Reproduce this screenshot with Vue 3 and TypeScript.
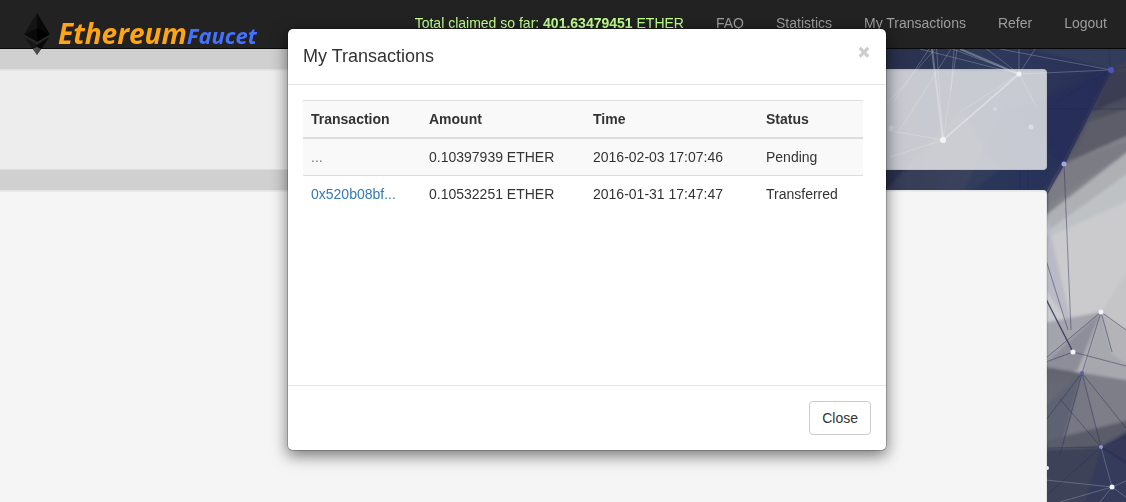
<script setup lang="ts">
import { ref } from 'vue'

interface Transaction {
  hash: string
  amount: string
  time: string
  status: string
}

const open = ref(true)
const links: string[] = ['FAQ', 'Statistics', 'My Transactions', 'Refer', 'Logout']
const transactions: Transaction[] = [
  { hash: '...', amount: '0.10397939 ETHER', time: '2016-02-03 17:07:46', status: 'Pending' },
  { hash: '0x520b08bf...', amount: '0.10532251 ETHER', time: '2016-01-31 17:47:47', status: 'Transferred' },
]
</script>

<template>
  <div class="page">
    <svg class="backdrop" viewBox="700 0 426 502" preserveAspectRatio="xMaxYMin slice" aria-hidden="true">
      <defs>
        <linearGradient id="sky" x1="0" y1="0" x2="1" y2="0">
          <stop offset="0" stop-color="#d0d0d0" />
          <stop offset=".35" stop-color="#252b45" />
          <stop offset=".65" stop-color="#303a5b" />
          <stop offset="1" stop-color="#272e56" />
        </linearGradient>
        <linearGradient id="slate" x1="0" y1="0" x2="0" y2="1">
          <stop offset="0" stop-color="#3c3f50" />
          <stop offset="1" stop-color="#777780" />
        </linearGradient>
        <linearGradient id="dusk" x1="0" y1="0" x2="0" y2="1">
          <stop offset="0" stop-color="#62636f" />
          <stop offset=".5" stop-color="#70717d" />
          <stop offset="1" stop-color="#343a59" />
        </linearGradient>
        <filter id="soft" x="-5%" y="-5%" width="110%" height="110%"><feGaussianBlur stdDeviation="1.5" /></filter>
        <filter id="fine" x="-5%" y="-5%" width="110%" height="110%"><feGaussianBlur stdDeviation=".7" /></filter>
      </defs>
      <rect x="700" width="426" height="502" fill="url(#sky)" />
      <g filter="url(#soft)">
        <path d="M886 190L960 110L1000 170L960 200H886Z" fill="#4b5063" opacity=".4" />
        <path d="M960 200L1005 100L1060 160L1030 200Z" fill="#222a58" opacity=".3" />
        <path d="M1030 49H1130V75L1111 70Z" fill="#323c5c" />
        <path d="M1111 70L1130 60V170L1040 240L1064 164Z" fill="url(#slate)" />
        <path d="M1111 70L1064 164L1010 110Z" fill="#23295a" opacity=".5" />
        <path d="M1130 72L1111 70L1092 112L1130 95Z" fill="#3a3e52" />
        <path d="M1088 122L1130 108V132L1076 157Z" fill="#5c5d68" />
        <path d="M1064 164L1130 134V160L1047 222V192Z" fill="#82838a" />
        <path d="M1064 164L1047 192V205L1130 150V140Z" fill="#7b7c85" />
        <path d="M1046 216L1130 152V512H1046Z" fill="#cbcbcd" />
        <path d="M1046 215L1130 150V172L1075 215L1046 232Z" fill="#aeb0b4" />
        <path d="M1046 232L1130 172V200L1046 238Z" fill="#bec2c5" />
        <path d="M1046 215L1073 330L1046 290Z" fill="#bab9c6" />
        <path d="M1046 322L1101 312L1130 332V380H1046Z" fill="#b3b3b8" />
        <path d="M1046 323L1101 312L1046 362Z" fill="#a3a4ac" />
        <path d="M1101 312L1130 268V332Z" fill="#c5c5c8" />
        <path d="M1101 312L1046 362V378L1078 370Z" fill="#8d8e99" />
        <path d="M1101 312L1082 373L1130 381V366L1112 354Z" fill="#a7a7ae" />
        <path d="M1046 367L1082 373L1130 381V512H1046Z" fill="url(#dusk)" />
        <path d="M1082 373L1101 447L1130 422V382Z" fill="#7d7e88" />
        <path d="M1082 373L1046 405V455L1060 449Z" fill="#5f6272" />
        <path d="M1082 373L1063 446L1101 447Z" fill="#777884" />
        <path d="M1046 441L1101 427L1130 420V440L1101 447H1046Z" fill="#5a5c6a" />
        <path d="M1046 449L1101 447L1130 462V512H1046Z" fill="#3d4259" />
        <path d="M1101 447L1130 430V466Z" fill="#343959" />
        <path d="M1101 447L1085 502H1130V467Z" fill="#2b315b" opacity=".5" />
      </g>
      <g class="pale" filter="url(#fine)">
        <path d="M936 40L943 140M954 49L951 90M960 30L943 140M920 49L1019 74M942 45L1019 74M975 40L1019 74M1035 49L1019 74L1019 45M1019 74L943 140M1019 74L960 112M1019 74L1037 108M943 140L890 157M943 140L886 130M935 49L886 105M929 49L893 103M951 49L900 130M1019 74L1111 70M1111 70L1000 49" />
        <path d="M1112 487L1101 447M1112 487L1060 502M1112 487L1046 480M1112 487L1126 497M1112 487L1126 481M1112 487L1100 502" />
      </g>
      <g class="bright" filter="url(#fine)">
        <path d="M932 49L943 140L1019 74L960 49" />
      </g>
      <g class="ink" filter="url(#fine)">
        <path d="M1111 70L1064 164L1040 200M1111 70L1108 45M1111 70L1126 67M1111 70L1045 109M1111 70L1060 80M1064 164L1048 130M1064 164L1030 200M1064 164L1071 330M1048 109H1126M1020 160V200M1028 165V200M1046 260L1068 330M1046 299L1073 352" />
        <path d="M1101 312L1046 358M1101 312L1082 373M1073 352L1126 366M1073 352L1046 362M1101 312L1126 330M1101 312L1112 352M1082 373L1101 447L1046 448M1082 373L1046 420M1082 373L1060 455M1060 399L1101 447M1101 447L1126 461M1101 447L1126 437M1101 447L1047 495M1082 373L1126 428" />
      </g>
      <path d="M1046 299L1073 352M1101 447L1126 463M1111 70L1064 164L1040 206" fill="none" stroke="#2b3059" stroke-width="1.5" opacity=".65" />
      <g fill="#f2f4fc">
        <circle cx="1019" cy="74" r="2.5" /><circle cx="943" cy="140" r="3" />
        <circle cx="1073" cy="352" r="2.5" /><circle cx="1112" cy="487" r="2.5" />
        <circle cx="1047" cy="468" r="2" /><circle cx="1101" cy="312" r="2.5" />
        <circle cx="1031" cy="127" r="2.5" opacity=".45" /><circle cx="891" cy="128" r="2.5" opacity=".35" />
      </g>
      <circle cx="1111" cy="70" r="3" fill="#4e57b8" />
      <circle cx="1064" cy="164" r="2.5" fill="#a3a6e5" />
      <circle cx="1082" cy="373" r="2" fill="#5964a6" />
      <circle cx="1101" cy="447" r="2" fill="#8d97d3" />
      <circle cx="995" cy="109" r="2" fill="#7182b5" opacity=".6" />
    </svg>

    <header class="navbar">
      <a class="brand" href="#">
        <svg class="gem" viewBox="0 0 26 42" aria-hidden="true">
          <path d="M13 0L0 21.500L13 29Z" fill="#141414" />
          <path d="M13 0L26 21.500L13 29Z" fill="#080808" />
          <path d="M13 15.500L0 21.500L13 29Z" fill="#0a0a0a" />
          <path d="M13 15.500L26 21.500L13 29Z" fill="#010101" />
          <path d="M1 24.500L13 32V42Z" fill="#151515" />
          <path d="M25 24.500L13 32V42Z" fill="#080808" />
          <path d="M9 36L13 42L17 36L13 34Z" fill="#777" opacity=".6" />
          <path d="M0 22L13 29.500L26 22" fill="none" stroke="#292929" />
        </svg>
        <span class="name">Ethereum<span class="suffix">Faucet</span></span>
      </a>
      <nav class="links">
        <span class="total">Total claimed so far: <b>401.63479451</b> ETHER</span>
        <a v-for="link in links" :key="link" href="#">{{ link }}</a>
      </nav>
    </header>

    <main class="content">
      <section class="panel translucent"></section>
      <section class="panel main-panel"></section>
    </main>

    <div v-if="open" class="overlay">
      <div class="modal" role="dialog" aria-labelledby="dialog-title">
        <div class="modal-header">
          <h4 id="dialog-title">My Transactions</h4>
          <button class="dismiss" type="button" aria-label="Dismiss" @click="open = false">×</button>
        </div>
        <div class="modal-body">
          <table>
            <colgroup><col class="c1"><col class="c2"><col class="c3"><col></colgroup>
            <thead>
              <tr><th>Transaction</th><th>Amount</th><th>Time</th><th>Status</th></tr>
            </thead>
            <tbody>
              <tr v-for="tx in transactions" :key="tx.time">
                <td><a href="#" :class="{ unsent: tx.status === 'Pending' }">{{ tx.hash }}</a></td>
                <td>{{ tx.amount }}</td>
                <td>{{ tx.time }}</td>
                <td>{{ tx.status }}</td>
              </tr>
            </tbody>
          </table>
        </div>
        <div class="modal-footer">
          <button class="close" type="button" @click="open = false">Close</button>
        </div>
      </div>
    </div>
  </div>
</template>

<style>
body {
  margin: 0;
  background: #d0d0d0;
}
</style>

<style scoped>
* {
  box-sizing: border-box;
}
.page {
  position: relative;
  display: flex;
  flex-direction: column;
  min-height: 100vh;
  overflow: hidden;
  font: 14px/20px "Liberation Sans", Arial, sans-serif;
  color: #333;
}
a {
  text-decoration: none;
}
.backdrop {
  position: absolute;
  top: 0;
  right: 0;
  height: 100%;
}
.pale path {
  fill: none;
  stroke: #a9b8c8;
  opacity: .35;
}
.bright path {
  fill: none;
  stroke: #d5dfe6;
  stroke-width: 2;
  opacity: .35;
}
.ink path {
  fill: none;
  stroke: #282d58;
  opacity: .45;
}
.navbar {
  position: relative;
  z-index: 1;
  display: flex;
  justify-content: space-between;
  height: 49px;
  padding: 0 4px 0 24px;
  background: #222;
  border-bottom: 1px solid #080808;
}
.brand {
  display: flex;
  gap: 8px;
  padding-top: 13px;
}
.gem {
  width: 26px;
  height: 42px;
}
.name {
  font: italic bold 28px/40px "Open Sans", "Noto Sans", sans-serif;
  color: #ffa414;
}
.suffix {
  font-size: 22px;
  color: #4472ff;
}
.links {
  display: flex;
  gap: 2px;
  padding-top: 13px;
  white-space: nowrap;
}
.links > * {
  padding: 0 15px;
  color: #9d9d9d;
}
.links .total {
  color: #bfff8f;
}
.content {
  position: relative;
  display: flex;
  flex: 1;
  flex-direction: column;
  gap: 20px;
  margin-right: 79px;
  padding-top: 20px;
}
.panel {
  border: 1px solid #e3e3e3;
  border-width: 1px 1px 1px 0;
  border-radius: 0 4px 4px 0;
  background: #f5f5f5;
  box-shadow: inset 0 1px 1px rgba(0, 0, 0, .05);
}
.translucent {
  height: 101px;
  opacity: .78;
}
.main-panel {
  flex: 1;
  border-bottom: 0;
  border-bottom-right-radius: 0;
}
.overlay {
  position: fixed;
  inset: 0;
  z-index: 2;
  display: flex;
  align-items: flex-start;
  justify-content: center;
  padding: 28px 0 28px 48px;
}
.modal {
  width: 600px;
  border: 1px solid rgba(0, 0, 0, .2);
  border-radius: 6px;
  background: #fff;
  background-clip: padding-box;
  box-shadow: 0 5px 15px rgba(0, 0, 0, .5);
}
.modal-header {
  display: flex;
  align-items: flex-start;
  justify-content: space-between;
  padding: 15px;
  border-bottom: 1px solid #e5e5e5;
}
h4 {
  margin: 0;
  font-size: 18px;
  font-weight: 500;
  line-height: 25px;
}
.dismiss {
  padding: 0;
  border: 0;
  background: none;
  font: 800 24px/16px "Open Sans", Arial, sans-serif;
  color: #ccc;
  cursor: pointer;
}
.modal-body {
  height: 300px;
  padding: 15px 23px 15px 15px;
  overflow: hidden;
}
table {
  width: 100%;
  table-layout: fixed;
  border-spacing: 0;
}
.c1 {
  width: 118px;
}
.c2 {
  width: 164px;
}
.c3 {
  width: 173px;
}
th,
td {
  padding: 8px;
  text-align: left;
}
th {
  border-top: 1px solid #ddd;
  border-bottom: 2px solid #ddd;
  background: #f9f9f9;
}
tbody tr:nth-child(odd) td {
  background: #f9f9f9;
}
tbody tr + tr td {
  border-top: 1px solid #ddd;
}
td a {
  color: #337ab7;
}
td .unsent {
  color: #777;
}
.modal-footer {
  display: flex;
  justify-content: flex-end;
  padding: 15px;
  border-top: 1px solid #e5e5e5;
}
.close {
  padding: 6px 12px;
  border: 1px solid #ccc;
  border-radius: 4px;
  background: #fff;
  font: inherit;
  color: #333;
  cursor: pointer;
}
</style>
